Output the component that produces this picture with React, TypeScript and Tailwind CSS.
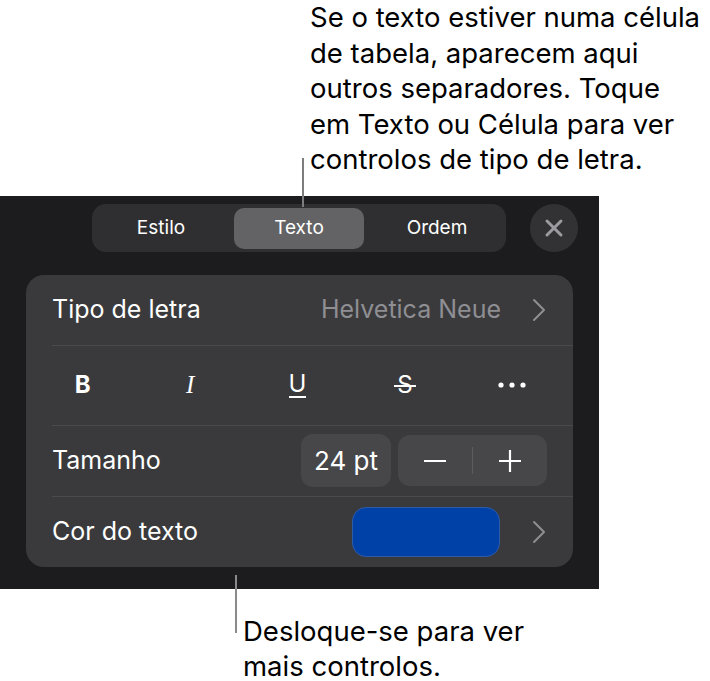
import React from "react";

function Chevron() {
  return (
    <svg width="14" height="24" viewBox="0 0 14 24" fill="none">
      <path d="M2 2 L12 12 L2 22" stroke="#8e8e93" strokeWidth="2" strokeLinecap="round" strokeLinejoin="round" />
    </svg>
  );
}

function Sep() {
  return <div className="ml-[26px] h-px bg-[#4a4a4d]" />;
}

export default function App() {
  return (
    <div className="relative w-[710px] h-[681px] overflow-hidden bg-white font-['Inter','Liberation_Sans',sans-serif]">
      <div className="pl-[310px] text-[27.5px] leading-[35.5px] text-black">
        <div>Se o texto estiver numa célula</div>
        <div>de tabela, aparecem aqui</div>
        <div>outros separadores. Toque</div>
        <div>em Texto ou Célula para ver</div>
        <div>controlos de tipo de letra.</div>
      </div>

      <div className="mt-[18px] w-[599px] h-[393px] bg-[#1c1c1e] pt-2">
        <div className="flex items-center pl-[92px]">
          <div className="grid w-[414px] h-[48px] grid-cols-3 gap-2 rounded-[14px] bg-[#2f2f32] p-1 pb-[3px] text-[19px] text-white">
            <div className="flex items-center justify-center">Estilo</div>
            <div className="flex items-center justify-center rounded-[10px] bg-[#636366]">Texto</div>
            <div className="flex items-center justify-center">Ordem</div>
          </div>
          <div className="ml-[24px] flex h-[48px] w-[48px] items-center justify-center rounded-full bg-[#323235]">
            <svg width="20" height="20" viewBox="0 0 20 20">
              <path d="M3 3 L17 17 M17 3 L3 17" stroke="#9b9ba0" strokeWidth="3" strokeLinecap="round" />
            </svg>
          </div>
        </div>

        <div className="mt-[23px] ml-[26px] w-[547px] overflow-hidden rounded-[18px] bg-[#3a3a3c] text-[25px] text-white">
          <div className="flex h-[70px] items-center justify-between pl-[26px] pr-[27px]">
            <span>Tipo de letra</span>
            <div className="flex items-center gap-[31px]">
              <span className="text-[#8e8e93]">Helvetica Neue</span>
              <Chevron />
            </div>
          </div>
          <Sep />
          <div className="grid h-[79px] grid-cols-5 items-center pl-[3px] pr-[7px]">
            <div className="flex justify-center">
              <span className="text-[24px] font-bold">B</span>
            </div>
            <div className="flex justify-center">
              <span className="font-['Liberation_Serif',serif] text-[25px] italic">I</span>
            </div>
            <div className="flex justify-center">
              <span className="border-b-2 border-white pb-[1px] text-[24px] leading-[22px]">U</span>
            </div>
            <div className="flex justify-center">
              <span className="relative text-[24px]">
                S
                <span className="absolute left-[-3px] right-[-3px] top-1/2 h-[2px] bg-white" />
              </span>
            </div>
            <div className="flex justify-center">
              <svg width="28" height="6" viewBox="0 0 28 6">
                <circle cx="3" cy="3" r="2.6" fill="white" />
                <circle cx="14" cy="3" r="2.6" fill="white" />
                <circle cx="25" cy="3" r="2.6" fill="white" />
              </svg>
            </div>
          </div>
          <Sep />
          <div className="flex h-[70px] items-center justify-between pl-[26px] pr-[26px]">
            <span>Tamanho</span>
            <div className="flex items-center gap-[7px]">
              <div className="flex h-[53px] w-[90px] items-center justify-center rounded-[12px] bg-[#47474a] text-[26px]">
                24 pt
              </div>
              <div className="flex h-[51px] w-[149px] items-center rounded-[12px] bg-[#47474a]">
                <div className="flex flex-1 items-center justify-center">
                  <svg width="24" height="4" viewBox="0 0 24 4">
                    <path d="M1 2 H23" stroke="white" strokeWidth="2.2" />
                  </svg>
                </div>
                <div className="h-[27px] w-px bg-[#5c5c60]" />
                <div className="flex flex-1 items-center justify-center">
                  <svg width="24" height="24" viewBox="0 0 24 24">
                    <path d="M1 12 H23 M12 1 V23" stroke="white" strokeWidth="2.2" />
                  </svg>
                </div>
              </div>
            </div>
          </div>
          <Sep />
          <div className="flex h-[70px] items-center justify-between pl-[26px] pr-[27px]">
            <span>Cor do texto</span>
            <div className="flex items-center gap-[32px]">
              <div className="h-[50px] w-[148px] rounded-[14px] border border-[#2d5ba6] bg-[#0041a8]" />
              <Chevron />
            </div>
          </div>
        </div>
      </div>

      <div className="mt-[25px] pl-[243px] text-[27.5px] leading-[35px] text-black">
        <div>Desloque-se para ver</div>
        <div>mais controlos.</div>
      </div>

      <div className="absolute left-[302px] top-[158px] h-[49px] w-[2px] bg-[#7d7d7d]" />
      <div className="absolute left-[235px] top-[575px] h-[58px] w-[2px] bg-[#8a8a8a]" />
    </div>
  );
}
